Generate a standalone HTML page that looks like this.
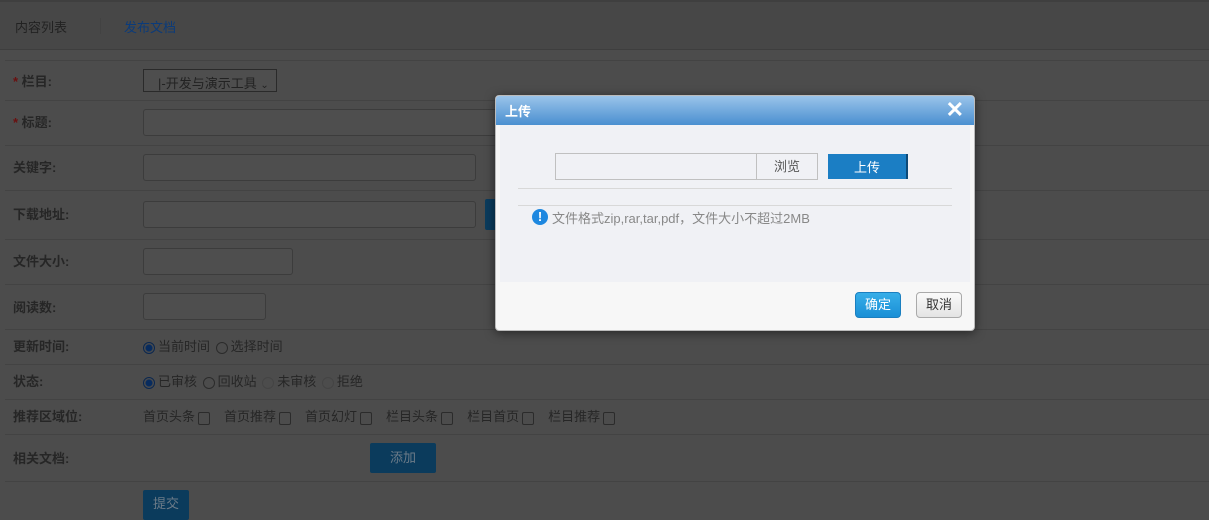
<!DOCTYPE html>
<html><head><meta charset="utf-8"><style>
*{box-sizing:border-box;margin:0;padding:0}
body{width:1209px;height:511px;overflow:hidden;background:#4c4c4c;font-family:"Liberation Sans","Noto Sans CJK SC",sans-serif;font-size:13px;color:#222;position:relative}
.hdr{position:absolute;left:0;top:0;width:1209px;height:50px;background:#474747;border-bottom:1px solid #3e3e3e;border-top:2px solid #3f3f3f}
.hdr span{position:absolute;top:15px;font-size:13px}
.line{position:absolute;left:5px;width:1204px;height:1px;background:#434343}
.lbl{position:absolute;left:13px;font-weight:bold;color:#262626;font-size:13px}
.lbl i{color:#6a1010;font-style:normal}
.inp{position:absolute;left:143px;border:1px solid #3c3c3c;border-radius:3px;background:#4e4e4e;height:27px}
.opt{position:absolute;font-size:13px;color:#262626}
.rad{display:inline-block;width:12px;height:12px;border:1px solid #2b2b2b;border-radius:50%;vertical-align:-3px;margin-right:3px;margin-left:2px}
.rad.on{border-color:#0a2750;background:radial-gradient(circle,#072b5e 3px,#4c4c4c 4px)}
.chk{display:inline-block;width:12px;height:13px;border:1px solid #2b2b2b;border-radius:2px;vertical-align:-4px;margin-left:3px;margin-right:14px}
.btn{position:absolute;background:#0b3b5c;color:#6c7b88;text-align:center;border-radius:2px}
.dlg{position:absolute;left:495px;top:95px;width:480px;height:236px;background:#f7f7f7;border:1px solid #bbb;border-radius:4px;box-shadow:0 2px 10px rgba(0,0,0,.5);overflow:hidden}
.dt{height:29px;background:linear-gradient(#9ac4ea,#4a8fd0);color:#fff;font-weight:bold;padding:5px 9px;font-size:13px}
.db{position:absolute;left:4px;top:29px;width:470px;height:157px;background:#f0f1f5}
</style></head><body>
<div class="hdr"><span style="left:15px;color:#222">内容列表</span><span style="left:100px;top:16px;width:1px;height:16px;background:#424242"></span><span style="left:124px;color:#0b3b7a">发布文档</span></div>
<div class="line" style="top:60px"></div>
<div class="lbl" style="top:71px"><i>* </i>栏目:</div>
<div style="position:absolute;left:143px;top:69px;width:134px;height:23px;border:1px solid #2a2a2a;background:#4e4e4e;font-size:13px;padding:3px 0 0 14px;color:#222">|-开发与演示工具 <span style="font-size:10px">⌄</span></div>
<div class="line" style="top:100px"></div>
<div class="lbl" style="top:112px"><i>* </i>标题:</div>
<div class="inp" style="top:109px;width:360px"></div>
<div class="line" style="top:145px"></div>
<div class="lbl" style="top:157px">关键字:</div>
<div class="inp" style="top:154px;width:333px"></div>
<div class="line" style="top:190px"></div>
<div class="lbl" style="top:204px">下载地址:</div>
<div class="inp" style="top:201px;width:333px"></div>
<div class="btn" style="left:485px;top:199px;width:12px;height:31px"></div>
<div class="line" style="top:239px"></div>
<div class="lbl" style="top:251px">文件大小:</div>
<div class="inp" style="top:248px;width:150px"></div>
<div class="line" style="top:284px"></div>
<div class="lbl" style="top:297px">阅读数:</div>
<div class="inp" style="top:293px;width:123px"></div>
<div class="line" style="top:329px"></div>
<div class="lbl" style="top:336px">更新时间:</div>
<div class="opt" style="left:141px;top:336px"><span class="rad on"></span>当前时间 <span class="rad"></span>选择时间</div>
<div class="line" style="top:364px"></div>
<div class="lbl" style="top:371px">状态:</div>
<div class="opt" style="left:141px;top:371px"><span class="rad on"></span>已审核 <span class="rad"></span>回收站 <span class="rad" style="border-color:#444"></span>未审核 <span class="rad" style="border-color:#444"></span>拒绝</div>
<div class="line" style="top:399px"></div>
<div class="lbl" style="top:406px">推荐区域位:</div>
<div class="opt" style="left:143px;top:406px">首页头条<span class="chk"></span>首页推荐<span class="chk"></span>首页幻灯<span class="chk"></span>栏目头条<span class="chk"></span>栏目首页<span class="chk"></span>栏目推荐<span class="chk"></span></div>
<div class="line" style="top:434px"></div>
<div class="lbl" style="top:448px">相关文档:</div>
<div class="btn" style="left:370px;top:443px;width:66px;height:30px;line-height:30px">添加</div>
<div class="line" style="top:481px"></div>
<div class="btn" style="left:143px;top:490px;width:46px;height:30px;line-height:28px">提交</div>

<div class="dlg">
<div class="dt">上传<span style="position:absolute;right:10px;top:1px;font-size:22px;font-weight:bold">✕</span></div>
<div class="db">
<div style="position:absolute;left:55px;top:28px;width:202px;height:27px;border:1px solid #c0c0c0;background:#f0f1f5"></div>
<div style="position:absolute;left:256px;top:28px;width:62px;height:27px;border:1px solid #c0c0c0;text-align:center;line-height:25px;color:#555">浏览</div>
<div style="position:absolute;left:328px;top:29px;width:80px;height:25px;background:#1b7ec4;border-right:2px solid #0d4a78;color:#fff;text-align:center;line-height:27px">上传</div>
<div style="position:absolute;left:18px;top:63px;width:434px;height:1px;background:#d8d8d8"></div>
<div style="position:absolute;left:18px;top:80px;width:434px;height:1px;background:#d8d8d8"></div>
<div style="position:absolute;left:32px;top:84px;width:16px;height:16px;border-radius:50%;background:#1e88e0;color:#fff;font-weight:bold;text-align:center;font-size:13px;line-height:16px">!</div>
<div style="position:absolute;left:52px;top:83px;color:#888">文件格式zip,rar,tar,pdf，文件大小不超过2MB</div>
</div>
<div style="position:absolute;left:359px;top:196px;width:46px;height:26px;border-radius:4px;background:linear-gradient(#37aee8,#1a8fd6);color:#fff;text-align:center;line-height:24px;border:1px solid #1a7fc0">确定</div>
<div style="position:absolute;left:420px;top:196px;width:46px;height:26px;border-radius:4px;background:linear-gradient(#fafafa,#e4e4e4);border:1px solid #aaa;color:#333;text-align:center;line-height:24px">取消</div>
</div>
</body></html>
